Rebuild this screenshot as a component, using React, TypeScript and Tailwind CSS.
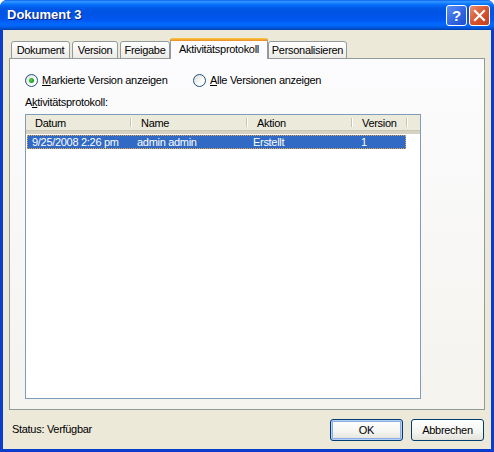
import React from "react";

/* ── Windows XP style "Dokument 3" dialog ── */

const FONT = { fontFamily: '"Liberation Sans", Arial, sans-serif' };

const TABS = [
  { label: "Dokument", w: "w-[59px]" },
  { label: "Version", w: "w-[46px]" },
  { label: "Freigabe", w: "w-[50px]" },
  { label: "Aktivitätsprotokoll", w: "w-[98px]", active: true },
  { label: "Personalisieren", w: "w-[79px]" },
];

function Radio({ checked }: { checked?: boolean }) {
  return (
    <span className="w-[13px] h-[13px] rounded-full border border-[#1C5180] bg-[linear-gradient(135deg,#DCDCD7_0%,#FFFFFF_70%)] flex items-center justify-center shrink-0">
      {checked && (
        <span className="w-[5px] h-[5px] rounded-full bg-[radial-gradient(circle_at_40%_40%,#55D551,#21A121_60%,#1A8A1A)]" />
      )}
    </span>
  );
}

function HeaderCell({ label, w }: { label: string; w: string }) {
  return (
    <div className={`${w} h-full flex items-center relative pl-[9px] shrink-0`}>
      <span>{label}</span>
      <span className="absolute right-0 top-[3px] bottom-[4px] w-[2px] border-l border-[#C7C5B2] border-r border-r-white" />
    </div>
  );
}

function XpButton({ label, focus }: { label: string; focus?: boolean }) {
  return (
    <button
      className={`w-[73px] h-[22px] rounded-[3px] border border-[#003C74] bg-[linear-gradient(to_bottom,#FFFFFF_0%,#F4F4F0_60%,#E3E2DA_100%)] text-[11px] text-black ${focus ? "shadow-[inset_0_0_0_1px_#B8D0F5,inset_0_0_0_2px_#89ADE4]" : ""}`}
    >
      {label}
    </button>
  );
}

export default function App() {
  return (
    <div style={FONT} className="w-[494px] h-[452px] flex flex-col bg-white text-[11px] tracking-[-0.3px] text-black">
      <div className="flex flex-col w-full h-full rounded-t-[7px] overflow-hidden bg-[#0A3DCC]">
        {/* Title bar */}
        <div className="h-[30px] shrink-0 flex items-center justify-between pl-[7px] pr-[4px] bg-[linear-gradient(to_bottom,#0058EE_0%,#3593FF_4%,#288EFF_8%,#127DFF_12%,#036FFC_16%,#0262EE_22%,#0057E5_30%,#0054E3_40%,#0055EB_60%,#005BF5_70%,#026AFE_80%,#0062EF_88%,#0052D6_94%,#0040AB_100%)]">
          <span className="text-white font-bold text-[13px] tracking-[0px] [text-shadow:1px_1px_0_#0A1E80]">
            Dokument 3
          </span>
          <div className="flex items-center gap-[2px] mt-[1px]">
            <div className="w-[21px] h-[21px] rounded-[3px] border border-white bg-[linear-gradient(135deg,#5D8EF6_0%,#2E63E0_60%,#1F4FCC_100%)] flex items-center justify-center text-white font-bold text-[15px] leading-none">
              ?
            </div>
            <div className="w-[21px] h-[21px] rounded-[3px] border border-white bg-[linear-gradient(135deg,#E98E72_0%,#D8542E_50%,#C0401C_100%)] flex items-center justify-center">
              <svg width="13" height="13" viewBox="0 0 13 13">
                <path d="M2 2 L11 11 M11 2 L2 11" stroke="white" strokeWidth="2.2" strokeLinecap="square" />
              </svg>
            </div>
          </div>
        </div>

        {/* Body */}
        <div className="flex-1 mx-[3px] mb-[3px] bg-[#ECE9D8] flex flex-col pt-[8px] px-[6px]">
          {/* Tabs */}
          <div className="flex items-end h-[21px] pl-[2px] relative z-10 -mb-px">
            {TABS.map((t, i) =>
              t.active ? (
                <div
                  key={t.label}
                  className={`${t.w} h-[21px] border-x border-[#919B9C] rounded-t-[3px] bg-[#FCFCFE] flex flex-col`}
                >
                  <div className="h-[3px] rounded-t-[3px] bg-[linear-gradient(to_bottom,#FFC83C,#E68B2C)] -mx-px" />
                  <div className="flex-1 flex items-center justify-center pb-[1px]">{t.label}</div>
                </div>
              ) : (
                <div
                  key={t.label}
                  className={`${t.w} h-[18px] ${i === 0 || i === 4 ? "" : "ml-[2px]"} border border-[#919B9C] rounded-t-[3px] bg-[linear-gradient(to_bottom,#FFFFFF,#ECEBE6)] flex items-center justify-center`}
                >
                  {t.label}
                </div>
              ),
            )}
          </div>

          {/* Panel */}
          <div className="h-[352px] border border-[#919B9C] bg-[linear-gradient(to_bottom,#FCFCFE,#F4F3EE)] pl-[15px] pt-[15px] flex flex-col">
            <div className="flex items-center h-[13px]">
              <label className="flex items-center gap-[4px] w-[168px]">
                <Radio checked />
                <span>
                  <u>M</u>arkierte Version anzeigen
                </span>
              </label>
              <label className="flex items-center gap-[4px]">
                <Radio />
                <span>
                  <u>A</u>lle Versionen anzeigen
                </span>
              </label>
            </div>

            <div className="mt-[9px] h-[13px] leading-[13px]">
              A<u>k</u>tivitätsprotokoll:
            </div>

            {/* List view */}
            <div className="mt-[5px] w-[396px] h-[285px] border border-[#7F9DB9] bg-white flex flex-col">
              <div className="h-[19px] shrink-0 flex bg-[#EBEADB] border-b-[3px] border-[#D6D2C2] shadow-[inset_0_-1px_0_#CBC7B8]">
                <HeaderCell label="Datum" w="w-[106px]" />
                <HeaderCell label="Name" w="w-[116px]" />
                <HeaderCell label="Aktion" w="w-[105px]" />
                <HeaderCell label="Version" w="w-[55px]" />
              </div>
              <div className="mt-[1px] ml-px w-[379px] h-[14px] bg-[#316AC5] text-white flex items-center outline outline-1 outline-dotted outline-[#E6A84A] -outline-offset-1">
                <span className="w-[109px] pl-[5px]">9/25/2008 2:26 pm</span>
                <span className="w-[115px] pl-[1px]">admin admin</span>
                <span className="w-[105px] pl-[2px]">Erstellt</span>
                <span className="pl-[5px]">1</span>
              </div>
            </div>
          </div>

          {/* Footer */}
          <div className="flex-1 flex items-start justify-between">
            <span className="pl-[3px] mt-[11px]">Status: Verfügbar</span>
            <div className="flex gap-[8px] mt-[9px] mr-[1px]">
              <XpButton label="OK" focus />
              <XpButton label="Abbrechen" />
            </div>
          </div>
        </div>
      </div>
    </div>
  );
}
